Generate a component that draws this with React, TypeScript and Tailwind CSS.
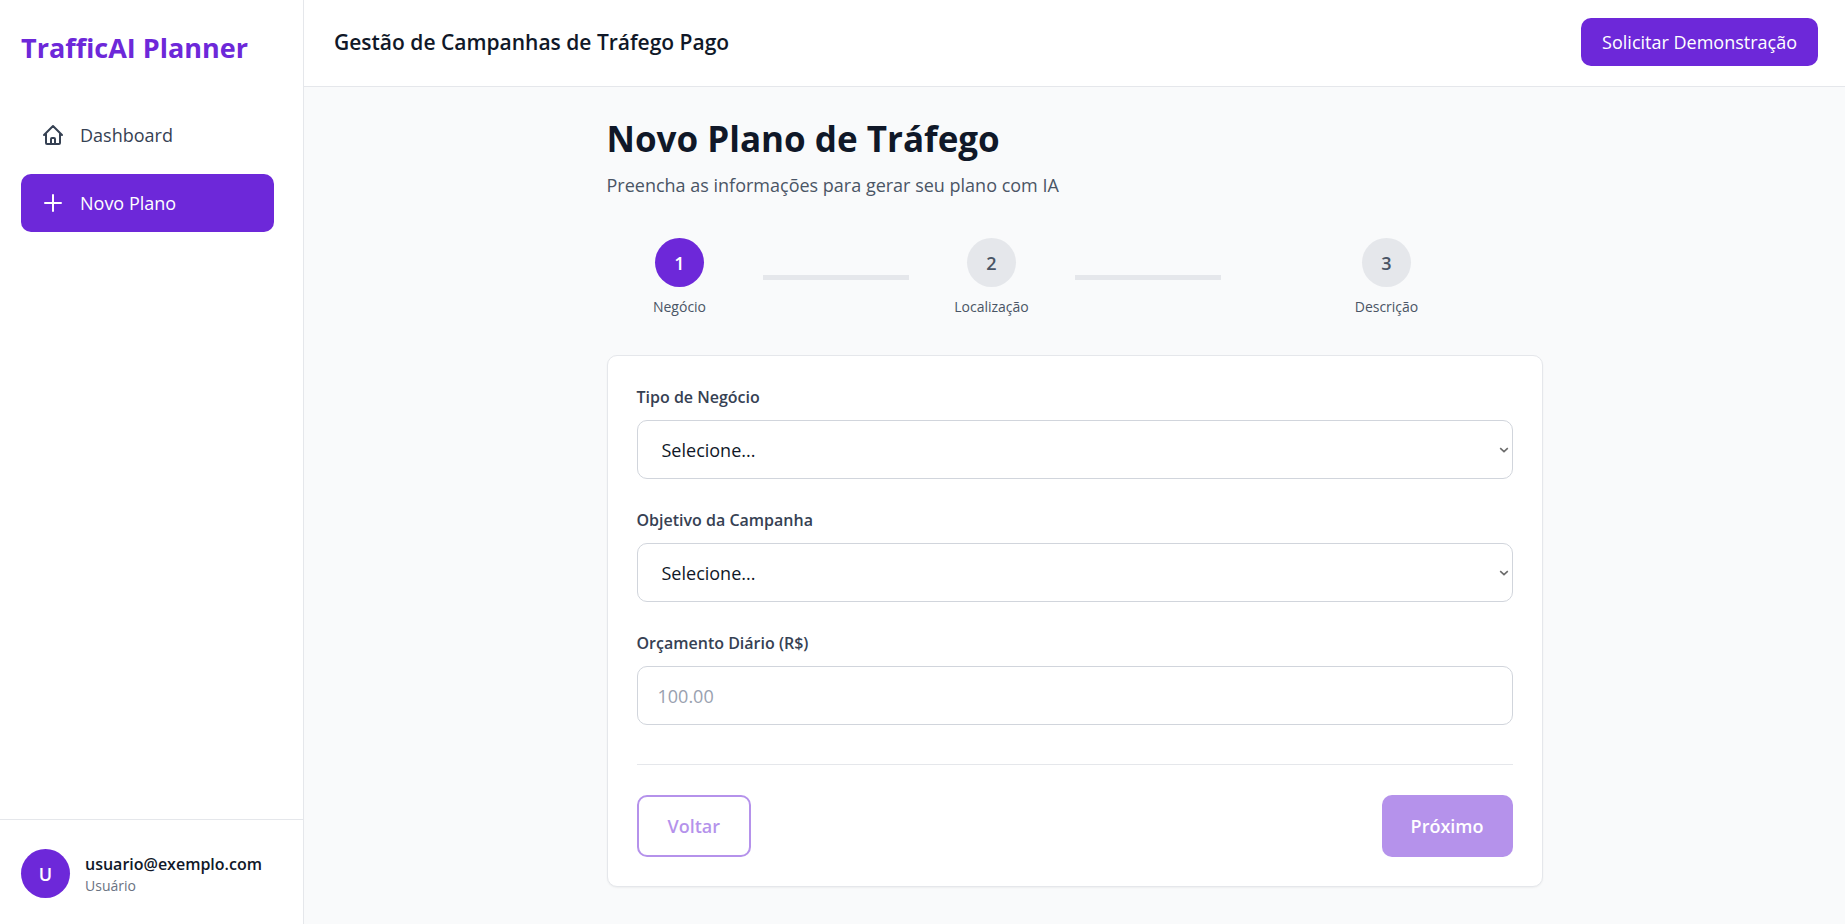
import React, { useState } from 'react'

interface Step {
  number: number
  label: string
}

const steps: Step[] = [
  { number: 1, label: 'Negócio' },
  { number: 2, label: 'Localização' },
  { number: 3, label: 'Descrição' },
]

const businessTypes = ['E-commerce', 'Serviços', 'Restaurante', 'Saúde', 'Educação']
const objectives = ['Vendas', 'Geração de Leads', 'Tráfego', 'Reconhecimento']

const NavIcon: React.FC<{ path: string }> = ({ path }) => (
  <svg
    className="h-6 w-6"
    viewBox="0 0 24 24"
    fill="none"
    stroke="currentColor"
    strokeWidth="2"
    strokeLinecap="round"
    strokeLinejoin="round"
    aria-hidden="true"
  >
    <path d={path} />
  </svg>
)

const Sidebar: React.FC = () => (
  <aside className="flex w-[304px] flex-shrink-0 flex-col border-r border-gray-200 bg-white">
    <div className="px-[21px] pt-[29px]">
      <h1 className="text-[27px] leading-[38px] font-bold text-[#6d28d9]">TrafficAI Planner</h1>
    </div>
    <nav className="mt-[39px] flex flex-1 flex-col gap-[10px] pr-[29px] pl-[21px]">
      <a href="#dashboard" className="flex h-[58px] items-center gap-[15px] rounded-[10px] px-5 text-gray-700">
        <NavIcon path="M3 12l2-2m0 0l7-7 7 7M5 10v10a1 1 0 001 1h3m10-11l2 2m-2-2v10a1 1 0 01-1 1h-3m-6 0a1 1 0 001-1v-4a1 1 0 011-1h2a1 1 0 011 1v4a1 1 0 001 1m-6 0h6" />
        <span>Dashboard</span>
      </a>
      <a
        href="#novo-plano"
        className="flex h-[58px] items-center gap-[15px] rounded-[10px] bg-[#6d28d9] px-5 text-white"
      >
        <NavIcon path="M12 4v16m8-8H4" />
        <span>Novo Plano</span>
      </a>
    </nav>
    <div className="flex items-center gap-[15px] border-t border-gray-200 px-[21px] pt-[29px] pb-[26px]">
      <div className="flex h-[49px] w-[49px] items-center justify-center rounded-full bg-[#6d28d9] font-semibold text-white">
        U
      </div>
      <div>
        <p className="text-[16px] leading-[24px] font-semibold text-gray-900">usuario@exemplo.com</p>
        <p className="text-[14px] leading-[20px] text-gray-500">Usuário</p>
      </div>
    </div>
  </aside>
)

const StepIndicator: React.FC<{ current: number }> = ({ current }) => (
  <ol className="mt-[39px] flex">
    {steps.map((step, index) => (
      <li key={step.number} className="flex flex-1 items-center">
        <div className="flex flex-1 flex-col items-center">
          <div
            className={`flex h-[49px] w-[49px] items-center justify-center rounded-full font-semibold ${
              step.number <= current ? 'bg-[#6d28d9] text-white' : 'bg-gray-200 text-gray-600'
            }`}
          >
            {step.number}
          </div>
          <span className="mt-[10px] text-[14px] leading-[20px] text-gray-600">{step.label}</span>
        </div>
        {index < steps.length - 1 && <div className="mx-[10px] h-[5px] flex-1 bg-gray-200" />}
      </li>
    ))}
  </ol>
)

interface SelectFieldProps {
  id: string
  label: string
  options: string[]
  value: string
  onChange: (value: string) => void
}

const SelectField: React.FC<SelectFieldProps> = ({ id, label, options, value, onChange }) => (
  <div>
    <label htmlFor={id} className="block text-[16px] leading-[25px] font-semibold text-gray-700">
      {label}
    </label>
    <div className="relative mt-[10px]">
      <select
        id={id}
        value={value}
        onChange={(e) => onChange(e.target.value)}
        className="block h-[59px] w-full appearance-none rounded-[10px] border border-gray-300 bg-white px-6 text-gray-900"
      >
        <option value="">Selecione...</option>
        {options.map((option) => (
          <option key={option} value={option}>
            {option}
          </option>
        ))}
      </select>
      <svg
        className="pointer-events-none absolute inset-y-0 right-1 my-auto h-[10px] w-[10px] text-[#6b6b6b]"
        viewBox="0 0 10 10"
        fill="none"
        stroke="currentColor"
        strokeWidth="1.6"
        aria-hidden="true"
      >
        <path d="M1.2 3.2 5 6.6l3.8-3.4" />
      </svg>
    </div>
  </div>
)

export default function App() {
  const [business, setBusiness] = useState('')
  const [objective, setObjective] = useState('')
  const [budget, setBudget] = useState('')

  return (
    <div className="flex min-h-screen bg-gray-50 font-['Open_Sans','Noto_Sans',sans-serif] text-[18px] leading-[28px]">
      <Sidebar />
      <div className="flex min-w-0 flex-1 flex-col">
        <header className="flex items-center justify-between border-b border-gray-200 bg-white pt-[18px] pr-[27px] pb-5 pl-[30px]">
          <h2 className="text-[21px] leading-[48px] font-semibold text-gray-900">Gestão de Campanhas de Tráfego Pago</h2>
          <button type="button" className="h-[48px] rounded-[10px] bg-[#6d28d9] px-[21px] text-white">
            Solicitar Demonstração
          </button>
        </header>

        <main className="mx-auto w-full max-w-[936px] flex-1 pt-[30px]">
          <h1 className="text-[35px] leading-[44px] font-bold text-gray-900">Novo Plano de Tráfego</h1>
          <p className="mt-[10px] text-gray-600">Preencha as informações para gerar seu plano com IA</p>

          <StepIndicator current={1} />

          <form
            className="mt-[38px] rounded-[10px] border border-gray-200 bg-white p-[29px] shadow-xs"
            onSubmit={(e) => e.preventDefault()}
          >
            <div className="flex flex-col gap-[29px]">
              <SelectField
                id="business"
                label="Tipo de Negócio"
                options={businessTypes}
                value={business}
                onChange={setBusiness}
              />
              <SelectField
                id="objective"
                label="Objetivo da Campanha"
                options={objectives}
                value={objective}
                onChange={setObjective}
              />
              <div>
                <label htmlFor="budget" className="block text-[16px] leading-[25px] font-semibold text-gray-700">
                  Orçamento Diário (R$)
                </label>
                <input
                  id="budget"
                  type="text"
                  inputMode="decimal"
                  placeholder="100.00"
                  value={budget}
                  onChange={(e) => setBudget(e.target.value)}
                  className="mt-[10px] block h-[59px] w-full rounded-[10px] border border-gray-300 bg-white px-5 text-gray-900 placeholder:text-gray-400"
                />
              </div>
            </div>

            <div className="mt-[39px] flex justify-between border-t border-gray-200 pt-[30px]">
              <button
                type="button"
                disabled
                className="h-[62px] rounded-[10px] border-2 border-[#6d28d9] px-[29px] font-semibold text-[#6d28d9] disabled:opacity-50"
              >
                Voltar
              </button>
              <button
                type="submit"
                disabled={!business || !objective || !budget}
                className="h-[62px] rounded-[10px] bg-[#6d28d9] px-[29px] font-semibold text-white disabled:opacity-50"
              >
                Próximo
              </button>
            </div>
          </form>
        </main>
      </div>
    </div>
  )
}
